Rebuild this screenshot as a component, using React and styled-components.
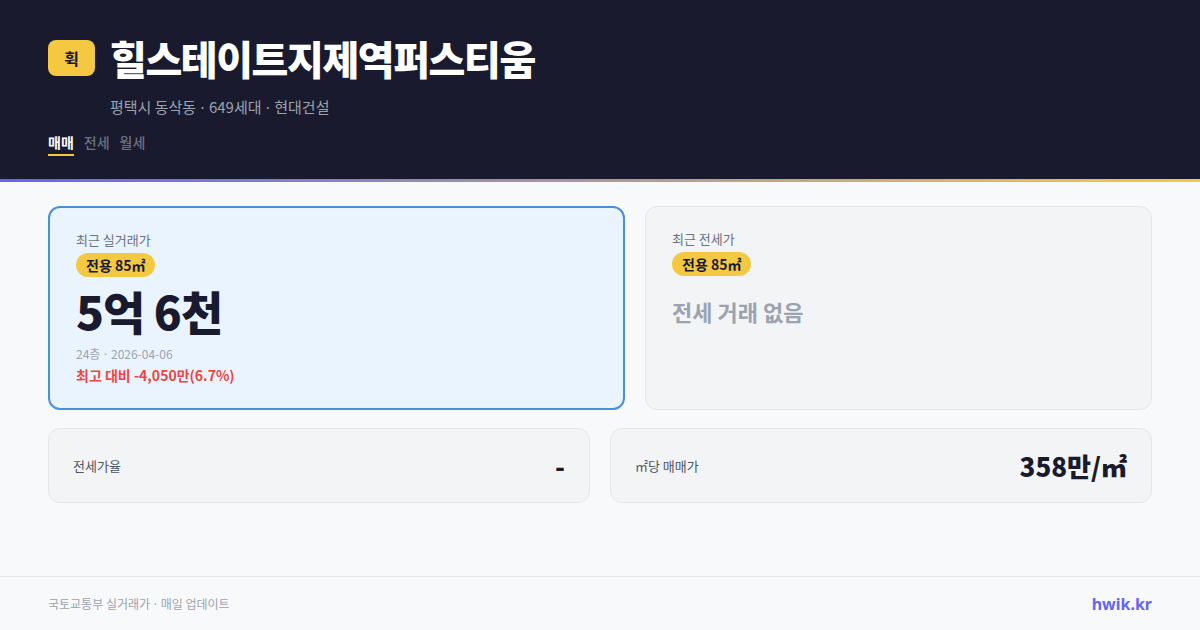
import React from "react";
import styled, { createGlobalStyle } from "styled-components";

const GlobalStyle = createGlobalStyle`
  * { box-sizing: border-box; }
  html, body { margin: 0; padding: 0; }
  body {
    width: 1200px;
    height: 630px;
    overflow: hidden;
    background: #f8f9fb;
    font-family: "Noto Sans CJK KR", "Noto Sans", sans-serif;
  }
`;

const App = () => {
  return (
    <Page>
      <GlobalStyle />
      <Header>
        <TitleRow>
          <Logo>휙</Logo>
          <Title>힐스테이트지제역퍼스티움</Title>
        </TitleRow>
        <SubTitle>
          평택시 동삭동 <Dot>·</Dot> 649세대 <Dot>·</Dot> 현대건설
        </SubTitle>
        <Tabs>
          <Tab $active>매매</Tab>
          <Tab>전세</Tab>
          <Tab>월세</Tab>
        </Tabs>
      </Header>
      <GradientBar />
      <Main>
        <TopGrid>
          <PriceCard $highlight>
            <Label>최근 실거래가</Label>
            <Badge>전용 85㎡</Badge>
            <Price>5억 6천</Price>
            <Meta>
              24층 <Dot>·</Dot> 2026-04-06
            </Meta>
            <Diff>최고 대비 -4,050만(6.7%)</Diff>
          </PriceCard>
          <PriceCard>
            <Label>최근 전세가</Label>
            <Badge>전용 85㎡</Badge>
            <Empty>전세 거래 없음</Empty>
          </PriceCard>
        </TopGrid>
        <BottomGrid>
          <StatCard>
            <StatLabel>전세가율</StatLabel>
            <StatValue>-</StatValue>
          </StatCard>
          <StatCard>
            <StatLabel>㎡당 매매가</StatLabel>
            <StatValue>358만/㎡</StatValue>
          </StatCard>
        </BottomGrid>
      </Main>
      <Footer>
        <FooterText>
          국토교통부 실거래가 <Dot>·</Dot> 매일 업데이트
        </FooterText>
        <Brand>hwik.kr</Brand>
      </Footer>
    </Page>
  );
};

const Page = styled.div`
  width: 1200px;
  height: 630px;
  display: flex;
  flex-direction: column;
`;

const Header = styled.header`
  background: #1a1a2e;
  height: 179px;
  padding: 36px 48px 0;
  display: flex;
  flex-direction: column;
`;

const TitleRow = styled.div`
  display: flex;
  align-items: center;
  gap: 15px;
  height: 44px;
`;

const Logo = styled.div`
  width: 47px;
  height: 36px;
  border-radius: 8px;
  background: #f5c842;
  color: #1a1a2e;
  font-size: 16px;
  font-weight: 700;
  display: flex;
  align-items: center;
  justify-content: center;
`;

const Title = styled.h1`
  margin: 0;
  color: #ffffff;
  font-size: 40px;
  font-weight: 800;
  letter-spacing: -1.4px;
  line-height: 44px;
`;

const Dot = styled.span`
  font-family: "Noto Sans", sans-serif;
  margin: 0 1px;
`;

const SubTitle = styled.div`
  margin-top: 17px;
  margin-left: 62px;
  color: #9ca3af;
  font-size: 15px;
  line-height: 20px;
`;

const Tabs = styled.div`
  display: flex;
  gap: 10px;
  margin-top: 15px;
`;

const Tab = styled.div`
  font-size: 14px;
  font-weight: ${(p) => (p.$active ? 700 : 500)};
  color: ${(p) => (p.$active ? "#ffffff" : "#6b7280")};
  padding-bottom: 2px;
  border-bottom: 2px solid ${(p) => (p.$active ? "#f5c842" : "transparent")};
  line-height: 20px;
`;

const GradientBar = styled.div`
  height: 3px;
  background: linear-gradient(90deg, #6366f1, #f5c842);
`;

const Main = styled.main`
  flex: 1;
  padding: 24px 48px 0;
  display: flex;
  flex-direction: column;
  gap: 18px;
`;

const TopGrid = styled.div`
  display: grid;
  grid-template-columns: 577fr 507fr;
  gap: 20px;
`;

const PriceCard = styled.div`
  height: 204px;
  border-radius: 12px;
  padding: 23px 26px;
  background: ${(p) => (p.$highlight ? "#eaf4ff" : "#f3f4f6")};
  border: ${(p) => (p.$highlight ? "2px solid #4a90d9" : "1px solid #e5e7eb")};
  display: flex;
  flex-direction: column;
  align-items: flex-start;
`;

const Label = styled.div`
  font-size: 13px;
  color: #6b7280;
  line-height: 18px;
`;

const Badge = styled.span`
  margin-top: 4px;
  background: #f5c842;
  color: #1a1a2e;
  font-size: 14px;
  font-weight: 700;
  line-height: 24px;
  padding: 0 10px;
  border-radius: 12px;
`;

const Price = styled.div`
  margin-top: 4px;
  font-size: 46px;
  font-weight: 800;
  color: #1a1a2e;
  letter-spacing: -1px;
  line-height: 58px;
`;

const Meta = styled.div`
  margin-top: 6px;
  font-size: 12px;
  color: #9ca3af;
  line-height: 18px;
`;

const Diff = styled.div`
  margin-top: 1px;
  font-size: 14px;
  font-weight: 700;
  color: #ef4444;
  line-height: 20px;
`;

const Empty = styled.div`
  margin-top: 20px;
  font-size: 22px;
  font-weight: 700;
  color: #9ca3af;
  line-height: 30px;
`;

const BottomGrid = styled.div`
  display: grid;
  grid-template-columns: 1fr 1fr;
  gap: 20px;
`;

const StatCard = styled.div`
  height: 75px;
  border-radius: 12px;
  background: #f3f4f6;
  border: 1px solid #e5e7eb;
  padding: 0 24px;
  display: flex;
  align-items: center;
  justify-content: space-between;
`;

const StatLabel = styled.div`
  font-size: 13px;
  color: #4b5563;
`;

const StatValue = styled.div`
  font-size: 26px;
  font-weight: 800;
  color: #1a1a2e;
`;

const Footer = styled.footer`
  height: 54px;
  border-top: 1px solid #e5e7eb;
  padding: 0 48px;
  display: flex;
  align-items: center;
  justify-content: space-between;
`;

const FooterText = styled.div`
  font-size: 12px;
  color: #9ca3af;
`;

const Brand = styled.div`
  font-size: 16px;
  font-weight: 700;
  color: #6366f1;
  font-family: "Noto Sans", sans-serif;
`;

export default App;
